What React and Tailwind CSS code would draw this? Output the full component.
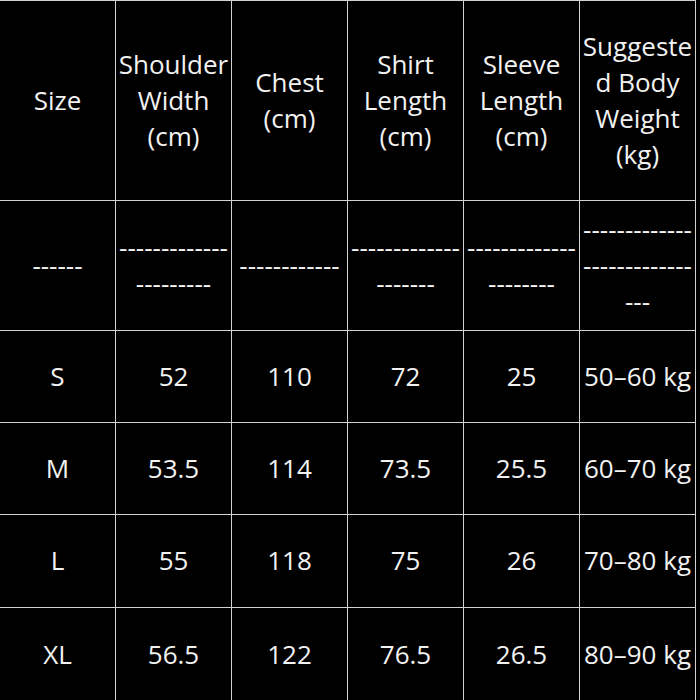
const headers = [
  'Size',
  'Shoulder Width (cm)',
  'Chest (cm)',
  'Shirt Length (cm)',
  'Sleeve Length (cm)',
  'Suggested Body Weight (kg)',
];

const divider = [
  '------',
  '----------------------',
  '------------',
  '--------------------',
  '---------------------',
  '-----------------------------',
];

const sizes = [
  ['S', '52', '110', '72', '25', '50–60 kg'],
  ['M', '53.5', '114', '73.5', '25.5', '60–70 kg'],
  ['L', '55', '118', '75', '26', '70–80 kg'],
  ['XL', '56.5', '122', '76.5', '26.5', '80–90 kg'],
];

function Cell({ children }) {
  return (
    <div className="flex items-center justify-center bg-black px-[2px] pb-[2px] text-center text-[26px] leading-[36px] text-[#f2f2f2] break-words">
      <span className="w-full">{children}</span>
    </div>
  );
}

export default function App() {
  const rows = [headers, divider, ...sizes];

  return (
    <div
      className="h-[700px] w-[700px] overflow-hidden bg-black"
      style={{ fontFamily: '"Open Sans", "Noto Sans", sans-serif' }}
    >
      <div className="grid w-[696px] grid-cols-[repeat(6,115px)] grid-rows-[199px_129px_91px_91px_92px_93px] gap-px bg-[#d2d2d2] pt-px pr-px">
        {rows.map((row, r) =>
          row.map((text, c) => <Cell key={`${r}-${c}`}>{text}</Cell>)
        )}
      </div>
    </div>
  );
}
